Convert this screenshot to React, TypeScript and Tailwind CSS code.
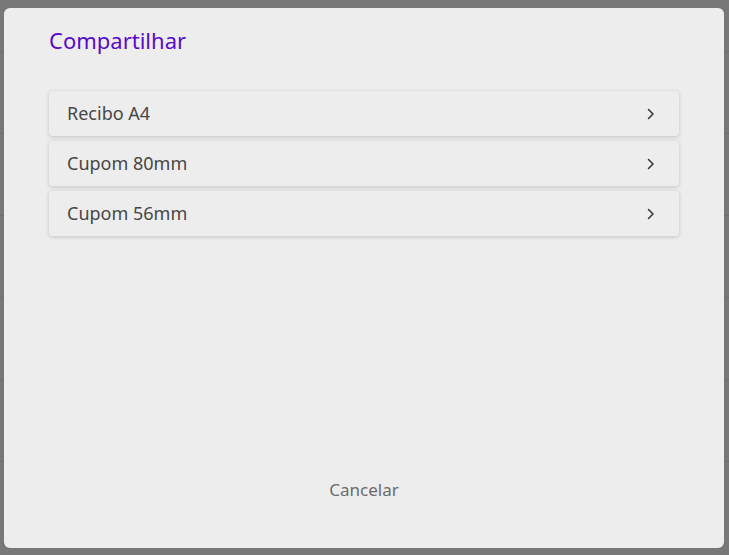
import React from 'react';

const options = ['Recibo A4', 'Cupom 80mm', 'Cupom 56mm'];

function Chevron() {
    return (
        <svg width="8" height="12" viewBox="0 0 8 12" fill="none" className="shrink-0">
            <path d="M1.5 1.5L6 6l-4.5 4.5" stroke="#333" strokeWidth="1.5" strokeLinecap="round" strokeLinejoin="round" />
        </svg>
    );
}

export default function App() {
    return (
        <div className="relative w-[729px] h-[555px] bg-[#787878] overflow-hidden" style={{ fontFamily: '"Noto Sans", "Open Sans", sans-serif' }}>
            {/* page behind the overlay */}
            <div className="flex flex-col pt-[51px]">
                {[0, 1, 2, 3, 4, 5].map((i) => (
                    <div key={i} className="h-[82px] border-t border-[#6e6e6e]"></div>
                ))}
            </div>

            <div className="absolute left-[4px] top-[8px] w-[720px] h-[540px] bg-[#ededed] rounded-[6px] flex flex-col px-[45px]">
                <h2 className="mt-[17px] text-[22px] leading-[30px] text-[#5a0ac8]">Compartilhar</h2>

                <div className="mt-[36px] flex flex-col gap-[5px]">
                    {options.map((label) => (
                        <div
                            key={label}
                            className="h-[45px] bg-[#ededed] rounded-[4px] shadow-[0_1px_4px_rgba(0,0,0,0.18)] flex items-center justify-between pl-[18px] pr-[24px]"
                        >
                            <span className="text-[18px] text-[#474747]">{label}</span>
                            <Chevron />
                        </div>
                    ))}
                </div>

                <div className="flex-1"></div>
                <div className="mb-[46px] flex justify-center">
                    <button className="text-[17px] text-[#6b6b6b]">Cancelar</button>
                </div>
            </div>
        </div>
    );
}
